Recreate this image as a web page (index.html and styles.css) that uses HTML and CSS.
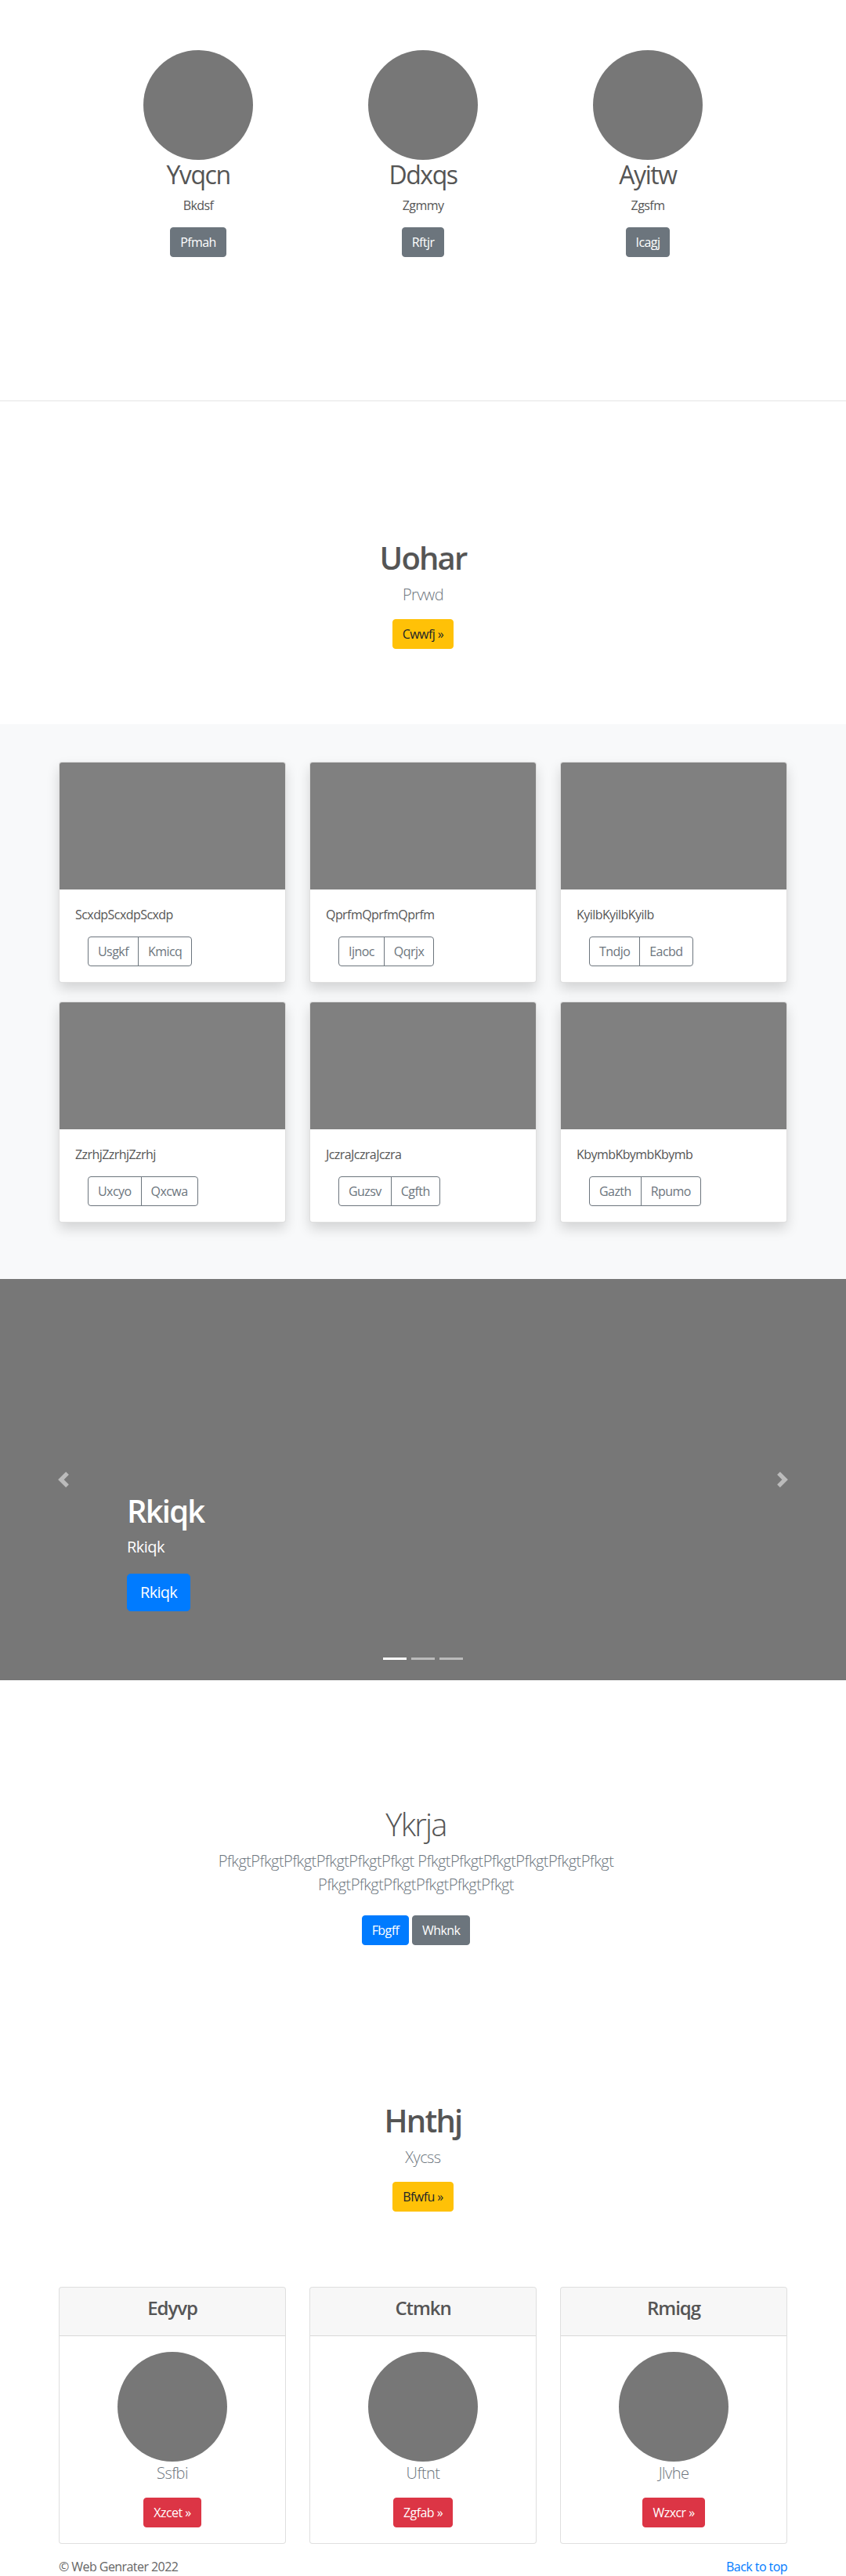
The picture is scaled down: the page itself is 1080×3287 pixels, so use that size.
FILE: index.html
```html
<!DOCTYPE html>
<html lang="en">
<head>
<meta charset="utf-8">
<title>Web Genrater</title>
<link rel="stylesheet" href="styles.css">
</head>
<body>
<section class="team">
  <div class="team-row">
    <div class="member">
      <div class="avatar"></div>
      <h2 class="member-name">Yvqcn</h2>
      <p class="member-role">Bkdsf</p>
      <p class="member-action"><a class="btn btn-secondary" href="#">Pfmah</a></p>
    </div>
    <div class="member">
      <div class="avatar"></div>
      <h2 class="member-name">Ddxqs</h2>
      <p class="member-role">Zgmmy</p>
      <p class="member-action"><a class="btn btn-secondary" href="#">Rftjr</a></p>
    </div>
    <div class="member">
      <div class="avatar"></div>
      <h2 class="member-name">Ayitw</h2>
      <p class="member-role">Zgsfm</p>
      <p class="member-action"><a class="btn btn-secondary" href="#">Icagj</a></p>
    </div>
  </div>
</section>
<hr class="divider">
<section class="hero">
  <h1 class="hero-title">Uohar</h1>
  <p class="lead muted">Prvwd</p>
  <p class="hero-action"><a class="btn btn-warning" href="#">Cwwfj »</a></p>
</section>
<section class="album">
  <div class="container">
    <div class="album-grid">
      <div class="card shadow-card">
        <div class="card-img"></div>
        <div class="card-body">
          <p class="card-text">ScxdpScxdpScxdp</p>
          <div class="btn-group"><button class="btn btn-outline" type="button">Usgkf</button><button class="btn btn-outline" type="button">Kmicq</button></div>
        </div>
      </div>
      <div class="card shadow-card">
        <div class="card-img"></div>
        <div class="card-body">
          <p class="card-text">QprfmQprfmQprfm</p>
          <div class="btn-group"><button class="btn btn-outline" type="button">Ijnoc</button><button class="btn btn-outline" type="button">Qqrjx</button></div>
        </div>
      </div>
      <div class="card shadow-card">
        <div class="card-img"></div>
        <div class="card-body">
          <p class="card-text">KyilbKyilbKyilb</p>
          <div class="btn-group"><button class="btn btn-outline" type="button">Tndjo</button><button class="btn btn-outline" type="button">Eacbd</button></div>
        </div>
      </div>
      <div class="card shadow-card">
        <div class="card-img"></div>
        <div class="card-body">
          <p class="card-text">ZzrhjZzrhjZzrhj</p>
          <div class="btn-group"><button class="btn btn-outline" type="button">Uxcyo</button><button class="btn btn-outline" type="button">Qxcwa</button></div>
        </div>
      </div>
      <div class="card shadow-card">
        <div class="card-img"></div>
        <div class="card-body">
          <p class="card-text">JczraJczraJczra</p>
          <div class="btn-group"><button class="btn btn-outline" type="button">Guzsv</button><button class="btn btn-outline" type="button">Cgfth</button></div>
        </div>
      </div>
      <div class="card shadow-card">
        <div class="card-img"></div>
        <div class="card-body">
          <p class="card-text">KbymbKbymbKbymb</p>
          <div class="btn-group"><button class="btn btn-outline" type="button">Gazth</button><button class="btn btn-outline" type="button">Rpumo</button></div>
        </div>
      </div>
    </div>
  </div>
</section>
<section class="carousel">
  <ol class="carousel-indicators">
    <li class="active"></li>
    <li></li>
    <li></li>
  </ol>
  <a class="carousel-control prev" href="#" aria-label="Previous">
    <svg class="control-icon" viewBox="0 0 8 8" width="20" height="20"><path fill="#fff" d="M5.25 0l-4 4 4 4 1.5-1.5L4.25 4l2.5-2.5L5.25 0z"/></svg>
  </a>
  <a class="carousel-control next" href="#" aria-label="Next">
    <svg class="control-icon" viewBox="0 0 8 8" width="20" height="20"><path fill="#fff" d="M2.75 0l-1.5 1.5L3.75 4l-2.5 2.5L2.75 8l4-4-4-4z"/></svg>
  </a>
  <div class="carousel-caption">
    <h1 class="caption-title">Rkiqk</h1>
    <p class="caption-text">Rkiqk</p>
    <p class="caption-action"><a class="btn btn-lg btn-primary" href="#">Rkiqk</a></p>
  </div>
</section>
<section class="intro">
  <h1 class="intro-title">Ykrja</h1>
  <p class="lead muted intro-text">PfkgtPfkgtPfkgtPfkgtPfkgtPfkgt PfkgtPfkgtPfkgtPfkgtPfkgtPfkgt PfkgtPfkgtPfkgtPfkgtPfkgtPfkgt</p>
  <p class="intro-actions"><a class="btn btn-primary btn-spaced" href="#">Fbgff</a> <a class="btn btn-secondary btn-spaced" href="#">Whknk</a></p>
</section>
<section class="hero">
  <h1 class="hero-title">Hnthj</h1>
  <p class="lead muted">Xycss</p>
  <p class="hero-action"><a class="btn btn-warning" href="#">Bfwfu »</a></p>
</section>
<section class="people">
  <div class="container">
    <div class="people-grid">
      <div class="card person">
        <div class="card-header"><h4 class="person-name">Edyvp</h4></div>
        <div class="card-body">
          <div class="avatar"></div>
          <p class="lead muted person-role">Ssfbi</p>
          <p class="person-action"><a class="btn btn-danger" href="#">Xzcet »</a></p>
        </div>
      </div>
      <div class="card person">
        <div class="card-header"><h4 class="person-name">Ctmkn</h4></div>
        <div class="card-body">
          <div class="avatar"></div>
          <p class="lead muted person-role">Uftnt</p>
          <p class="person-action"><a class="btn btn-danger" href="#">Zgfab »</a></p>
        </div>
      </div>
      <div class="card person">
        <div class="card-header"><h4 class="person-name">Rmiqg</h4></div>
        <div class="card-body">
          <div class="avatar"></div>
          <p class="lead muted person-role">Jlvhe</p>
          <p class="person-action"><a class="btn btn-danger" href="#">Wzxcr »</a></p>
        </div>
      </div>
    </div>
  </div>
</section>
<footer class="footer">
  <div class="container footer-inner">
    <p class="copyright">© Web Genrater 2022</p>
    <p class="back-top"><a href="#">Back to top</a></p>
  </div>
</footer>
</body>
</html>
```

FILE: styles.css
```css
* { box-sizing: border-box; }

html, body { margin: 0; padding: 0; }

body {
  font-family: "Open Sans", "Noto Sans", sans-serif;
  font-size: 16px;
  line-height: 1.5;
  letter-spacing: -0.035em;
  color: #555;
  background: #fff;
}

h1, h2, h4, p { margin-top: 0; }
h1, h2, h4 { letter-spacing: -0.045em; }

a { color: #007bff; text-decoration: none; }

.container {
  width: 960px;
  margin: 0 auto;
  padding: 0 15px;
}

/* buttons */
.btn {
  display: inline-block;
  font-family: inherit;
  font-size: 16px;
  line-height: 1.5;
  letter-spacing: -0.035em;
  font-weight: 400;
  padding: 6px 12px;
  border: 1px solid transparent;
  border-radius: 4px;
  text-align: center;
  vertical-align: middle;
  cursor: pointer;
}
.btn-secondary { background: #6c757d; border-color: #6c757d; color: #fff; }
.btn-primary { background: #007bff; border-color: #007bff; color: #fff; }
.btn-warning { background: #ffc107; border-color: #ffc107; color: #212529; }
.btn-danger { background: #dc3545; border-color: #dc3545; color: #fff; }
.btn-lg { padding: 8px 16px; font-size: 20px; border-radius: 4.8px; }
.btn-outline { background: transparent; border-color: #6c757d; color: #6c757d; }
.btn-spaced { margin: 8px 0; }

.btn-group { display: inline-flex; margin-left: 16px; }
.btn-group .btn { border-radius: 0; }
.btn-group .btn:first-child { border-radius: 4px 0 0 4px; }
.btn-group .btn + .btn { margin-left: -1px; border-radius: 0 4px 4px 0; }

.avatar {
  width: 140px;
  height: 140px;
  border-radius: 50%;
  background: #777;
  margin: 0 auto;
}

/* team */
.team { padding: 64px 0 167px; }
.team-row {
  display: grid;
  grid-template-columns: repeat(3, 287px);
  justify-content: center;
  text-align: center;
}
.member-name {
  font-size: 32px;
  font-weight: 400;
  line-height: 1.2;
  margin-bottom: 8px;
  color: #555;
}
.member-role { margin-bottom: 16px; }
.member-action { margin-bottom: 16px; }

.divider {
  margin: 0;
  border: 0;
  border-top: 1px solid rgba(0, 0, 0, .1);
  height: 0;
}

/* hero */
.hero {
  text-align: center;
  padding: 176px 0 80px;
}
.hero-title {
  font-size: 40px;
  line-height: 1.2;
  font-weight: 600;
  margin-bottom: 8px;
  color: #555;
}
.lead { font-size: 20px; font-weight: 300; line-height: 1.5; }
.muted { color: #6c757d; }
.hero .lead { margin-bottom: 16px; }
.hero-action { margin-bottom: 16px; }

/* album */
.album { background: #f8f9fa; padding: 48px 0 72px; }
.album-grid {
  display: grid;
  grid-template-columns: repeat(3, 1fr);
  column-gap: 30px;
  row-gap: 24px;
}
.card {
  background: #fff;
  border: 1px solid rgba(0, 0, 0, .125);
  border-radius: 4px;
  overflow: hidden;
}
.shadow-card { box-shadow: 0 8px 16px rgba(0, 0, 0, .15); }
.card-img { height: 162px; background: #808080; }
.card-body { padding: 20px; }
.card-text { margin-bottom: 16px; color: #555; }

/* carousel */
.carousel {
  position: relative;
  height: 512px;
  background: #777;
  overflow: hidden;
}
.carousel-indicators {
  position: absolute;
  left: 0;
  right: 0;
  bottom: 0;
  margin: 0 15% 16px;
  padding: 0;
  list-style: none;
  display: flex;
  justify-content: center;
  z-index: 2;
}
.carousel-indicators li {
  width: 30px;
  height: 3px;
  margin: 0 3px;
  box-sizing: content-box;
  background: #fff;
  background-clip: padding-box;
  border-top: 10px solid transparent;
  border-bottom: 10px solid transparent;
  opacity: .5;
}
.carousel-indicators li.active { opacity: 1; }
.carousel-control {
  position: absolute;
  top: 0;
  bottom: 0;
  width: 15%;
  display: flex;
  align-items: center;
  justify-content: center;
  opacity: .5;
  z-index: 1;
}
.carousel-control.prev { left: 0; }
.carousel-control.next { right: 0; }
.control-icon { display: block; width: 20px; height: 20px; }
.carousel-caption {
  position: absolute;
  left: 15%;
  right: 15%;
  bottom: 48px;
  padding: 20px 0;
  color: #fff;
  text-align: left;
  z-index: 3;
}
.caption-title {
  font-size: 40px;
  line-height: 1.2;
  font-weight: 600;
  margin-bottom: 8px;
}
.caption-text { font-size: 20px; line-height: 1.4; margin-bottom: 20px; }
.caption-action { margin-bottom: 20px; }

/* intro */
.intro {
  text-align: center;
  padding: 160px 18px 0 0;
}
.intro-title {
  font-size: 40px;
  line-height: 1.2;
  font-weight: 300;
  margin-bottom: 8px;
  color: #555;
}
.intro-text {
  max-width: 640px;
  margin: 0 auto 16px;
}
.intro-actions { margin-bottom: 16px; }

/* people */
.people-grid {
  display: grid;
  grid-template-columns: repeat(3, 1fr);
  column-gap: 30px;
}
.person { text-align: center; }
.card-header {
  padding: 12px 20px;
  background: rgba(0, 0, 0, .03);
  border-bottom: 1px solid rgba(0, 0, 0, .125);
}
.person-name {
  font-size: 24px;
  line-height: 1.2;
  font-weight: 600;
  margin-bottom: 8px;
  color: #555;
}
.person-role { margin-bottom: 16px; }
.person-action { margin-bottom: 0; }

/* footer */
.footer { padding: 17px 0 48px; color: #666; }
.footer-inner { display: flex; justify-content: space-between; }
.footer-inner p { margin: 0; }
```
